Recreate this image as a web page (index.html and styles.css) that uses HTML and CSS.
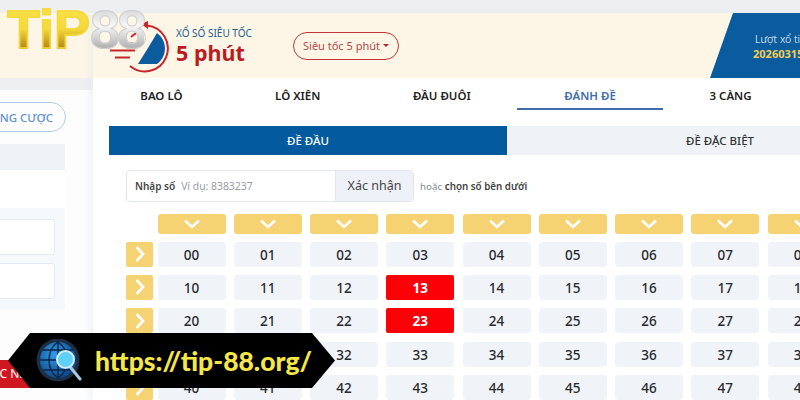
FILE: index.html
```html
<!DOCTYPE html>
<html lang="vi">
<head>
<meta charset="utf-8">
<title>Xổ số siêu tốc</title>
<link rel="stylesheet" href="styles.css">
</head>
<body>
<div class="page">
  <aside class="side">
    <div class="side-top"></div>
    <div class="side-body">
      <div class="pill-outline"><span>NG CƯỢC</span></div>
      <div class="card">
        <div class="card-head"></div>
        <div class="card-blank"></div>
        <div class="card-inputs">
          <div class="box"></div>
          <div class="box"></div>
        </div>
      </div>
      <div class="red-btn">ÁC NHẬN</div>
    </div>
  </aside>
  <main class="main">
    <header class="top">
      <svg class="clock" viewBox="0 0 60 56" width="60" height="56">
        <path d="M37 7.5 A23 23 0 1 1 20 48" fill="none" stroke="#c5252b" stroke-width="2"/>
        <path d="M31 6 L38 3 L38 11 Z" fill="#c5252b"/>
        <path d="M38 30 L47 15 A19 19 0 0 1 47 46 L28 46 Z" fill="#0b5c9e"/>
        <path d="M21 19 L26 15 M14 25.5 H23 M0 32.5 H25 M5 39.5 H20" stroke="#c5252b" stroke-width="2" fill="none"/>
      </svg>
      <div class="title">
        <div class="title-sm">XỔ SỐ SIÊU TỐC</div>
        <div class="title-lg">5 phút</div>
      </div>
      <div class="select">Siêu tốc 5 phút<i class="caret"></i></div>
      <div class="turn">
        <div class="turn-label">Lượt xổ tiếp theo</div>
        <div class="turn-num">20260315</div>
      </div>
    </header>
    <nav class="tabs">
      <a class="tab">BAO LÔ</a>
      <a class="tab">LÔ XIÊN</a>
      <a class="tab">ĐẦU ĐUÔI</a>
      <a class="tab active">ĐÁNH ĐỀ</a>
      <a class="tab">3 CÀNG</a>
    </nav>
    <section class="content">
      <div class="subtabs">
        <div class="subtab on">ĐỀ ĐẦU</div>
        <div class="subtab">ĐỀ ĐẶC BIỆT</div>
      </div>
      <div class="panel">
        <div class="entry">
          <div class="group">
            <div class="field"><b>Nhập số</b><span>Ví dụ: 8383237</span></div>
            <div class="confirm">Xác nhận</div>
          </div>
          <div class="hint">hoặc <b>chọn số bên dưới</b></div>
        </div>
        <div class="board">
          <div class="line heads">
            <div class="rowhead blank"></div>
            <div class="cells">
              <div class="colhead"><svg viewBox="0 0 18 10"><path d="M2 1.5 L9 8 L16 1.5"/></svg></div>
              <div class="colhead"><svg viewBox="0 0 18 10"><path d="M2 1.5 L9 8 L16 1.5"/></svg></div>
              <div class="colhead"><svg viewBox="0 0 18 10"><path d="M2 1.5 L9 8 L16 1.5"/></svg></div>
              <div class="colhead"><svg viewBox="0 0 18 10"><path d="M2 1.5 L9 8 L16 1.5"/></svg></div>
              <div class="colhead"><svg viewBox="0 0 18 10"><path d="M2 1.5 L9 8 L16 1.5"/></svg></div>
              <div class="colhead"><svg viewBox="0 0 18 10"><path d="M2 1.5 L9 8 L16 1.5"/></svg></div>
              <div class="colhead"><svg viewBox="0 0 18 10"><path d="M2 1.5 L9 8 L16 1.5"/></svg></div>
              <div class="colhead"><svg viewBox="0 0 18 10"><path d="M2 1.5 L9 8 L16 1.5"/></svg></div>
              <div class="colhead"><svg viewBox="0 0 18 10"><path d="M2 1.5 L9 8 L16 1.5"/></svg></div>
            </div>
          </div>
          <div class="line">
            <div class="rowhead"><svg viewBox="0 0 10 18"><path d="M1.5 2 L8 9 L1.5 16"/></svg></div>
            <div class="cells"><div class="cell">00</div><div class="cell">01</div><div class="cell">02</div><div class="cell">03</div><div class="cell">04</div><div class="cell">05</div><div class="cell">06</div><div class="cell">07</div><div class="cell">08</div></div>
          </div>
          <div class="line">
            <div class="rowhead"><svg viewBox="0 0 10 18"><path d="M1.5 2 L8 9 L1.5 16"/></svg></div>
            <div class="cells"><div class="cell">10</div><div class="cell">11</div><div class="cell">12</div><div class="cell sel">13</div><div class="cell">14</div><div class="cell">15</div><div class="cell">16</div><div class="cell">17</div><div class="cell">18</div></div>
          </div>
          <div class="line">
            <div class="rowhead"><svg viewBox="0 0 10 18"><path d="M1.5 2 L8 9 L1.5 16"/></svg></div>
            <div class="cells"><div class="cell">20</div><div class="cell">21</div><div class="cell">22</div><div class="cell sel">23</div><div class="cell">24</div><div class="cell">25</div><div class="cell">26</div><div class="cell">27</div><div class="cell">28</div></div>
          </div>
          <div class="line">
            <div class="rowhead"><svg viewBox="0 0 10 18"><path d="M1.5 2 L8 9 L1.5 16"/></svg></div>
            <div class="cells"><div class="cell">30</div><div class="cell">31</div><div class="cell">32</div><div class="cell">33</div><div class="cell">34</div><div class="cell">35</div><div class="cell">36</div><div class="cell">37</div><div class="cell">38</div></div>
          </div>
          <div class="line">
            <div class="rowhead"><svg viewBox="0 0 10 18"><path d="M1.5 2 L8 9 L1.5 16"/></svg></div>
            <div class="cells"><div class="cell">40</div><div class="cell">41</div><div class="cell">42</div><div class="cell">43</div><div class="cell">44</div><div class="cell">45</div><div class="cell">46</div><div class="cell">47</div><div class="cell">48</div></div>
          </div>
        </div>
      </div>
    </section>
  </main>
</div>

<div class="logo"><span class="logo-tip">TiP</span><span class="logo-88">88</span></div>

<div class="banner">
  <svg class="globe" viewBox="0 0 46 46" width="46" height="46">
    <defs>
      <radialGradient id="g" cx="0.4" cy="0.35" r="0.75"><stop offset="0" stop-color="#2f9ae8"/><stop offset="1" stop-color="#0a3f7e"/></radialGradient>
    </defs>
    <circle cx="22" cy="21" r="21.5" fill="#1c2f45"/>
    <circle cx="22" cy="21" r="18" fill="url(#g)"/>
    <path d="M22 3 V39 M4 21 H40 M7 11 H37 M7 31 H37 M22 3 C10 11 10 31 22 39 M22 3 C34 11 34 31 22 39" fill="none" stroke="#0b2547" stroke-width="1.4"/>
    <path d="M35 29 L44 40" stroke="#a8cbe0" stroke-width="3" stroke-linecap="round"/>
    <circle cx="29.5" cy="20.5" r="8.5" fill="#5fd0f7" stroke="#d5ecf7" stroke-width="2"/>
  </svg>
  <span class="url">https://tip-88.org/</span>
</div>
</body>
</html>
```
FILE: styles.css
```css
* { box-sizing: border-box; }
html, body { margin: 0; padding: 0; }
body {
  width: 800px;
  height: 400px;
  overflow: hidden;
  position: relative;
  background: #eeeff1;
  font-family: "Noto Sans", "Open Sans", sans-serif;
  color: #222;
}
.page { display: flex; width: 1000px; height: 400px; padding-top: 13px; }

.side { width: 93px; flex: none; display: flex; flex-direction: column; overflow: hidden; }
.side-top { height: 65px; background: #fdf6e6; flex: none; }
.side-body { margin-top: 12px; flex: 1; background: #fdfdfe; position: relative; padding-top: 12px; }
.pill-outline {
  width: 130px; height: 30px; margin-left: -64px;
  border: 1.5px solid #b4cbe6; border-radius: 15px;
  display: flex; align-items: center; justify-content: flex-end; padding-right: 12px;
  font-size: 11.5px; font-weight: 500; color: #5d90d6;
}
.card { width: 130px; margin: 12px 0 0 -65px; }
.card-head { height: 26px; background: #eff3f8; }
.card-blank { height: 38px; background: #fff; }
.card-inputs { height: 102px; background: #f6f9fc; padding: 11px 10px 0; }
.box { height: 36px; background: #fff; border: 1px solid #e4ebf3; border-radius: 3px; margin-bottom: 8px; }
.red-btn {
  position: absolute; left: -18px; top: 270px; width: 83px; height: 28px;
  background: #cf1720; color: #fff; font-size: 12px; line-height: 28px;
  white-space: nowrap; overflow: hidden; padding-left: 10px;
}

.main { flex: none; width: 907px; background: #fff; box-shadow: -4px 0 6px rgba(220,225,235,.35); position: relative; }
.top { height: 65px; background: #fdf6e6; display: flex; align-items: center; position: relative; overflow: hidden; }
.clock { margin-left: 17px; flex: none; width: 60px; height: 56px; }
.title { margin-left: 6px; width: 117px; }
.title-sm { font-size: 10px; line-height: 12px; color: #1f5d8f; white-space: nowrap; }
.title-lg { font-size: 21.5px; line-height: 24px; font-weight: 700; color: #b91c22; white-space: nowrap; margin-top: 2px; }
.select {
  width: 106px; height: 28px; border: 1.5px solid #c0353a; border-radius: 14px;
  display: flex; align-items: center; justify-content: center;
  font-size: 11px; color: #b5474b; white-space: nowrap;
}
.caret { width: 0; height: 0; border: 3px solid transparent; border-top-color: #b5272b; border-bottom: 0; margin-left: 3px; }
.turn {
  position: absolute; left: 617px; top: 0; width: 290px; height: 65px;
  background: #0b5c9e; clip-path: polygon(23px 0, 100% 0, 100% 100%, 0 100%);
  padding: 19px 0 0 45px; white-space: nowrap;
}
.turn-label { font-size: 10.5px; line-height: 14px; color: #fff; font-weight: 300; }
.turn-num { font-size: 11px; line-height: 15px; color: #f3cd4e; font-weight: 700; margin-left: -2px; }

.tabs { display: flex; height: 32px; padding-left: 1px; }
.tab {
  padding: 0 46.3px; font-size: 11.5px; font-weight: 600; color: #222; white-space: nowrap;
  line-height: 35px; height: 32px; flex: none;
}
.tab.active { padding: 0 47.3px; color: #3f6da8; border-bottom: 2.5px solid #3f6da8; }

.content { padding: 16px 0 0 16px; }
.subtabs { display: flex; height: 29px; }
.subtab {
  font-size: 11.5px; font-weight: 500; line-height: 29px; text-align: center;
  background: #eff3f8; color: #333; width: 426px;
}
.subtab.on { background: #035a9e; color: #fff; width: 398px; }
.panel { padding: 15px 0 0 17px; }
.entry { display: flex; align-items: center; }
.group { display: flex; width: 288px; height: 32px; border: 1px solid #e3e7ed; border-radius: 4px; overflow: hidden; }
.field { flex: 1; display: flex; align-items: center; padding-left: 8px; font-size: 10px; white-space: nowrap; }
.field b { font-weight: 600; color: #444; margin-right: 6px; }
.field span { color: #9a9da3; font-size: 10.4px; }
.confirm {
  width: 78px; background: #eef2f8; border-left: 1px solid #e3e7ed;
  font-size: 12.5px; line-height: 30px; text-align: center; color: #444;
}
.hint { margin-left: 6px; font-size: 9.8px; color: #8a8d92; white-space: nowrap; }
.hint b { font-weight: 600; color: #444; }

.board { margin-top: 11.5px; display: flex; flex-direction: column; gap: 8.4px; }
.line { display: flex; }
.heads { height: 20px; margin-bottom: -.4px; }
.rowhead {
  width: 27px; height: 25px; flex: none; margin-right: 4.5px;
  background: #f5d372; border-radius: 2px;
  display: flex; align-items: center; justify-content: center;
}
.rowhead.blank { background: none; height: 20px; }
.rowhead svg { width: 10px; height: 18px; fill: none; stroke: #fff; stroke-width: 2.6; }
.cells { display: flex; gap: 8.25px; }
.colhead {
  width: 68px; height: 20px; flex: none; background: #f5d372; border-radius: 3px;
  display: flex; align-items: center; justify-content: center;
}
.colhead svg { width: 18px; height: 10px; fill: none; stroke: #fff; stroke-width: 2.6; }
.cell {
  width: 68px; height: 25px; flex: none; background: #f0f3f8; border-radius: 4px;
  font-size: 13.5px; line-height: 27px; text-align: center; color: #262a2e; font-weight: 500;
}
.cell.sel { background: #fb0006; color: #fff; font-weight: 700; border-radius: 2px; }

.logo {
  position: absolute; left: 7px; top: 1px; display: flex;
  font-family: "Liberation Sans", sans-serif; font-weight: 700; font-size: 54px; line-height: 56px;
}
.logo-tip {
  background: linear-gradient(#f8e34a 0%, #f6d83a 50%, #a87a10 90%);
  -webkit-background-clip: text; background-clip: text; color: transparent;
  -webkit-text-stroke: 1.5px #f4d93c;
}
.logo-88 {
  letter-spacing: -3px;
  background: linear-gradient(#d8d8d8 15%, #f7f7f7 45%, #aeaeae 85%);
  -webkit-background-clip: text; background-clip: text; color: transparent;
  -webkit-text-stroke: 1px #cfcfcf;
}

.banner {
  position: absolute; left: 8px; top: 333px; width: 327px; height: 55px;
  background: #000;
  clip-path: polygon(22px 0, 304px 0, 100% 50%, 304px 100%, 22px 100%, 0 50%);
  display: flex; align-items: center;
}
.globe { margin-left: 28px; margin-top: 3px; flex: none; }
.url {
  margin-left: 13px; font-family: "Lato", "Noto Sans", sans-serif; font-weight: 900;
  font-size: 26.5px; color: #f6e64a; white-space: nowrap;
}
```
